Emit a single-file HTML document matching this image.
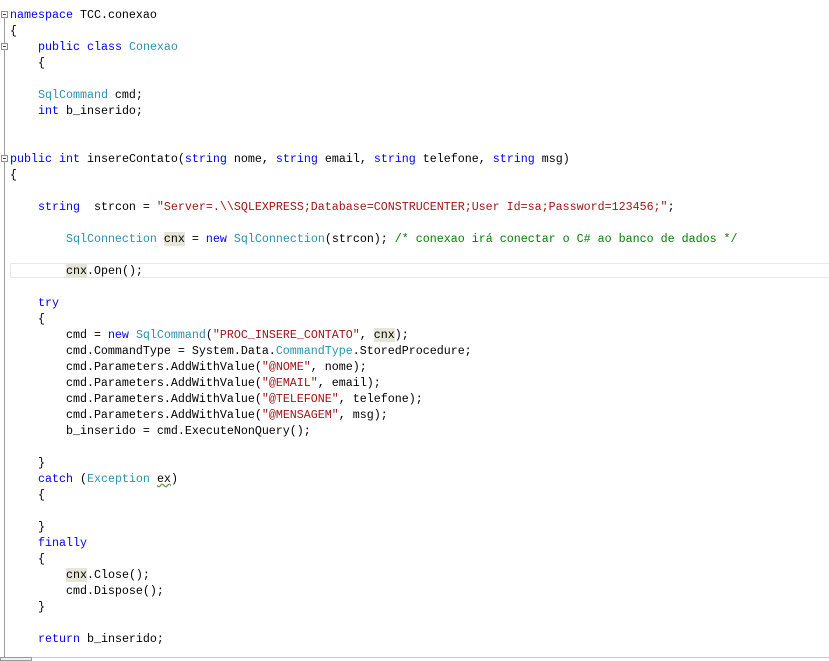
<!DOCTYPE html><html><head><style>
body{margin:0;background:#fff;width:829px;height:661px;overflow:hidden;position:relative}
pre{position:absolute;left:10px;top:7px;margin:0;font-family:"Liberation Mono",monospace;font-size:11.67px;line-height:16px;color:#000}
.k{color:#0000ff}.t{color:#2b91af}.s{color:#a31515}.c{color:#008000}.h{background:#e6e6d8}
.m{position:absolute;left:4px;width:1px;background:#a0a0a0}
.b{position:absolute;left:1px;width:7px;height:7px;border:1px solid #909090;box-sizing:border-box;background:#fff}
.b:after{content:"";position:absolute;left:1px;top:2px;width:3px;height:1px;background:#444}
</style></head><body>
<div class="m" style="top:14px;height:645px"></div>
<div class="b" style="top:11px"></div>
<div class="b" style="top:43px"></div>
<div class="b" style="top:155px"></div>
<div style="position:absolute;left:10px;top:263px;width:819px;height:15px;border:1px solid #e8e8e8;border-right:none;box-sizing:border-box"></div>
<div style="position:absolute;left:66px;top:264px;width:1px;height:13px;background:#000"></div>
<div style="position:absolute;left:0;top:657px;width:829px;height:1px;background:#c8c8c8"></div>
<div style="position:absolute;left:0;top:657px;width:32px;height:4px;border:1px solid #999;box-sizing:border-box;background:#f0f0f0"></div>
<pre><span class="k">namespace</span> TCC.conexao
{
    <span class="k">public</span> <span class="k">class</span> <span class="t">Conexao</span>
    {

    <span class="t">SqlCommand</span> cmd;
    <span class="k">int</span> b_inserido;


<span class="k">public</span> <span class="k">int</span> insereContato(<span class="k">string</span> nome, <span class="k">string</span> email, <span class="k">string</span> telefone, <span class="k">string</span> msg)
{

    <span class="k">string</span>  strcon = <span class="s">"Server=.\\SQLEXPRESS;Database=CONSTRUCENTER;User Id=sa;Password=123456;"</span>;

        <span class="t">SqlConnection</span> <span class="h">cnx</span> = <span class="k">new</span> <span class="t">SqlConnection</span>(strcon); <span class="c">/* conexao irá conectar o C# ao banco de dados */</span>

        <span class="h">cnx</span>.Open();

    <span class="k">try</span>
    {
        cmd = <span class="k">new</span> <span class="t">SqlCommand</span>(<span class="s">"PROC_INSERE_CONTATO"</span>, <span class="h">cnx</span>);
        cmd.CommandType = System.Data.<span class="t">CommandType</span>.StoredProcedure;
        cmd.Parameters.AddWithValue(<span class="s">"@NOME"</span>, nome);
        cmd.Parameters.AddWithValue(<span class="s">"@EMAIL"</span>, email);
        cmd.Parameters.AddWithValue(<span class="s">"@TELEFONE"</span>, telefone);
        cmd.Parameters.AddWithValue(<span class="s">"@MENSAGEM"</span>, msg);
        b_inserido = cmd.ExecuteNonQuery();

    }
    <span class="k">catch</span> (<span class="t">Exception</span> <span style="text-decoration:underline wavy #6a8a3a">ex</span>)
    {

    }
    <span class="k">finally</span>
    {
        <span class="h">cnx</span>.Close();
        cmd.Dispose();
    }

    <span class="k">return</span> b_inserido;</pre>
</body></html>
